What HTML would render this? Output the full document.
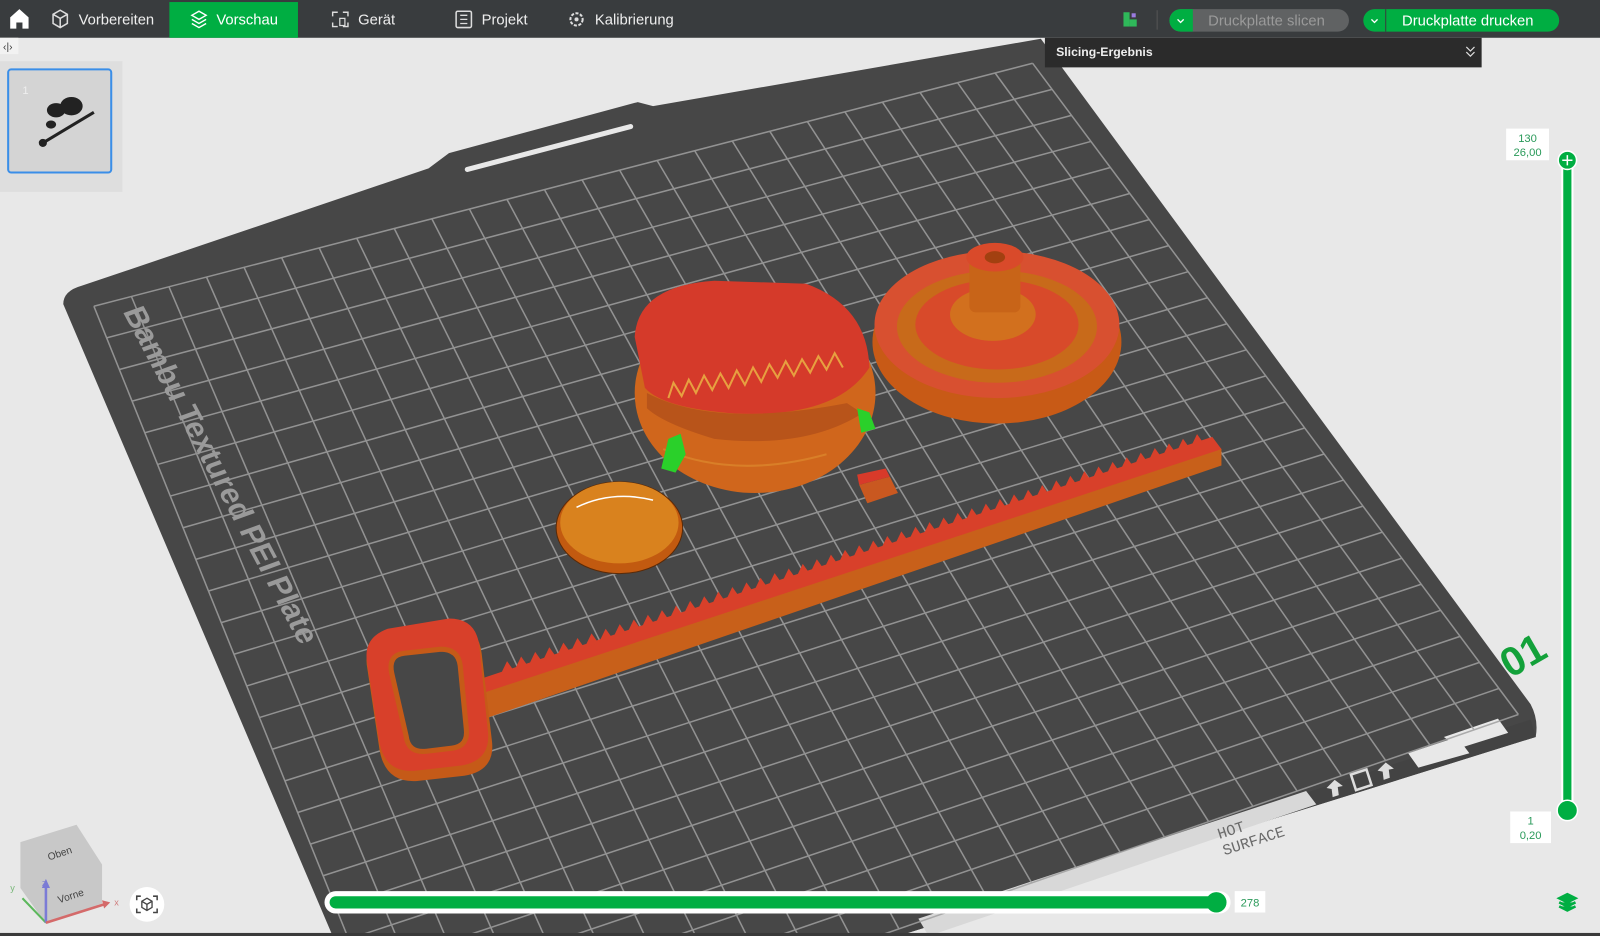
<!DOCTYPE html>
<html><head><meta charset="utf-8">
<style>
html,body{margin:0;padding:0;width:1600px;height:936px;overflow:hidden;background:#e8e8e8;font-family:"Liberation Sans",sans-serif}
svg{display:block}
</style></head>
<body>
<svg id="s" width="1600" height="936" viewBox="0 0 1568 917" preserveAspectRatio="none" xmlns="http://www.w3.org/2000/svg" font-family="Liberation Sans, sans-serif">
<rect width="1568" height="917" fill="#e8e8e8"/>
<path d="M62,298 Q62,285 80,280 L420,165 L440,150 L625,100 L640,104 L1020,38 L1500,690 Q1508,705 1505,722 L880,917 L326,917 Z" fill="#474747"/>
<path d="M1300,770 L1500,705 L1505,722 L880,917 L860,917 Z" fill="#434343"/>
<path d="M900,900 L1280,775 L1290,788 L910,917 Z" fill="#d8d8d8"/>
<text x="1195" y="822" font-size="15" fill="#6a6a6a" transform="rotate(-18 1195 822)" font-family="Liberation Mono, monospace">HOT</text>
<text x="1200" y="838" font-size="15" fill="#6a6a6a" transform="rotate(-18 1200 838)" font-family="Liberation Mono, monospace">SURFACE</text>
<path d="M1380,738 L1428,722 L1440,738 L1390,752 Z M1415,722 L1468,704 L1478,718 L1430,733 Z" fill="#e8e8e8"/>
<rect x="1326" y="756" width="16" height="16" fill="none" stroke="#ddd" stroke-width="2.5" transform="rotate(-18 1334 764)"/>
<path d="M1300,772 l8,-8 l8,6 l-5,1 l1,8 l-6,2 l-1,-8z M1350,755 l8,-8 l8,6 l-5,1 l1,8 l-6,2 l-1,-8z" fill="#ddd"/>
<path d="M458,166 L618,124" stroke="#e8e8e8" stroke-width="5" stroke-linecap="round"/>
<g id="grid" stroke="#a0a0a0" stroke-width="1.5" opacity="0.85"></g>
<text x="0" y="0" font-size="30" font-weight="bold" fill="#9a9a9a" transform="translate(120,305) rotate(62) skewX(-8)">Bambu Textured PEI Plate</text>
<text x="1480" y="665" font-size="40" font-weight="bold" fill="#13a13a" transform="rotate(-30 1480 665)">01</text>

<ellipse cx="607" cy="517" rx="62" ry="45" fill="#c25a10" stroke="#5a2a08"/>
<ellipse cx="607" cy="512" rx="58" ry="40" fill="#d9821e"/>
<path d="M565,497 Q600,480 640,490" stroke="#fff" stroke-width="1.5" fill="none"/>

<ellipse cx="740" cy="385" rx="118" ry="98" fill="#d0661c"/>
<path d="M622,330 Q625,280 700,275 L790,278 Q850,300 852,360 Q820,410 720,405 Q650,400 632,380 Z" fill="#d53a2a"/>
<path d="M634,385 Q700,420 830,395 L845,405 Q790,440 700,430 Q650,415 634,400 Z" fill="#b8541a"/>
<path d="M655,390 L660,375 L668,388 L675,372 L682,385 L690,368 L698,382 L706,366 L714,380 L722,363 L730,377 L738,360 L746,374 L754,357 L762,370 L770,354 L778,368 L786,352 L794,365 L802,349 L810,362 L818,346 L826,360" stroke="#e7a040" stroke-width="2" fill="none"/>
<path d="M650,440 Q720,470 810,445" stroke="#e09030" stroke-width="2" fill="none" opacity=".6"/>
<path d="M655,430 l12,-5 l5,20 l-10,18 l-14,-4 z M840,400 l12,4 l6,16 l-14,4z" fill="#2ad02a"/>

<ellipse cx="977" cy="335" rx="122" ry="80" fill="#c85a16"/>
<ellipse cx="977" cy="318" rx="120" ry="72" fill="#d85030"/>
<ellipse cx="977" cy="320" rx="98" ry="55" fill="#c86a1a"/>
<ellipse cx="977" cy="318" rx="80" ry="44" fill="#d84a2a"/>
<ellipse cx="973" cy="308" rx="42" ry="26" fill="#d2701e"/>
<rect x="950" y="250" width="50" height="56" rx="6" fill="#c86418"/>
<ellipse cx="975" cy="252" rx="28" ry="14" fill="#d94a2a"/>
<ellipse cx="975" cy="252" rx="10" ry="6" fill="#a24010"/>

<path d="M842,475 l30,-8 l8,16 l-30,10z" fill="#c95820"/><path d="M842,475 l30,-8 l-4,-8 l-28,6z" fill="#d83a2a"/>

<path d="M470,678 L1190,432 L1197,440 L1197,456 L478,703 Z" fill="#c8601a"/>
<path d="M462,668 L1188,428 L1197,440 L470,680 Z" fill="#d8402a"/>
<g id="teeth" fill="#d8402a"></g>
<path d="M360,655 Q355,630 380,620 L440,610 Q468,610 472,640 L482,725 Q486,755 455,760 L410,765 Q378,768 372,735 Z" fill="#c55a18"/>
<path d="M360,650 Q355,625 380,616 L440,606 Q468,606 470,636 L478,715 Q482,745 452,750 L408,755 Q378,758 372,728 Z" fill="#d8402a"/>
<path d="M384,660 Q380,642 396,640 L432,636 Q449,636 451,652 L457,714 Q459,731 443,733 L418,736 Q400,738 398,721 Z" fill="#474747" stroke="#c55a18" stroke-width="5"/>

<rect x="0" y="0" width="1568" height="37" fill="#393c3e"/>
<rect x="166" y="2" width="126" height="35" fill="#00ae42"/>
<path d="M10,28 L10,17 L19,9 L28,17 L28,28 L22,28 L22,22 L16,22 L16,28Z" fill="#fff"/>
<path d="M52,14 l7,-4 l7,4 v9 l-7,4 l-7,-4z M52,14 l7,4 l7,-4 M59,18 v9" stroke="#ddd" stroke-width="1.5" fill="none"/>
<text x="77" y="24" font-size="14.5" fill="#eee">Vorbereiten</text>
<path d="M188,15 l7,-4 l7,4 l-7,4z M188,19 l7,4 l7,-4 M188,23 l7,4 l7,-4" stroke="#fff" stroke-width="1.4" fill="none"/>
<text x="212" y="24" font-size="14.5" fill="#fff">Vorschau</text>
<path d="M326,16 v-4 h5 M336,12 h5 v4 M326,22 v4 h5 M341,22 v4 h-5" stroke="#ddd" stroke-width="1.4" fill="none"/><rect x="333" y="18" width="5" height="7" fill="none" stroke="#ddd" stroke-width="1.2"/>
<text x="351" y="24" font-size="14.5" fill="#eee">Gerät</text>
<rect x="447" y="11" width="15" height="16" rx="1.5" fill="none" stroke="#ddd" stroke-width="1.5"/><path d="M451,15 h7 M451,19 h7 M451,23 h7" stroke="#ddd" stroke-width="1.3"/>
<text x="472" y="24" font-size="14.5" fill="#eee">Projekt</text>
<circle cx="565" cy="19" r="6" fill="none" stroke="#ddd" stroke-width="2" stroke-dasharray="3 1.5"/><circle cx="565" cy="19" r="2" fill="#ddd"/>
<text x="583" y="24" font-size="14.5" fill="#eee">Kalibrierung</text>
<rect x="1101" y="12" width="6" height="14" fill="#2fb85a"/><rect x="1107" y="19" width="7" height="7" fill="#2fb85a"/><rect x="1109" y="13" width="4" height="4" fill="#9b7be0"/>
<line x1="1134" y1="10" x2="1134" y2="29" stroke="#555"/>
<rect x="1146" y="9" width="176" height="22" rx="11" fill="#606263"/>
<path d="M1146,20 a11,11 0 0 1 11,-11 h12 v22 h-12 a11,11 0 0 1 -11,-11z" fill="#00ae42"/>
<path d="M1154,19 l3,3 l3,-3" stroke="#fff" stroke-width="1.3" fill="none"/>
<text x="1184" y="25" font-size="14.5" fill="#9a9a9a">Druckplatte slicen</text>
<rect x="1336" y="9" width="192" height="22" rx="11" fill="#00ae42"/>
<line x1="1358" y1="9" x2="1358" y2="31" stroke="#393c3e" stroke-width="1"/>
<path d="M1344,19 l3,3 l3,-3" stroke="#fff" stroke-width="1.3" fill="none"/>
<text x="1374" y="25" font-size="14.5" fill="#fff">Druckplatte drucken</text>

<rect x="1024" y="37" width="428" height="29" fill="#2b2b2b"/>
<text x="1035" y="55" font-size="12" font-weight="bold" fill="#eee">Slicing-Ergebnis</text>
<path d="M1437,46 l4,4 l4,-4 M1437,51 l4,4 l4,-4" stroke="#ddd" stroke-width="1.2" fill="none"/>

<rect x="0" y="37" width="18" height="16" fill="#f2f2f2"/><text x="3" y="49" font-size="10" fill="#333">‹|›</text>
<rect x="0" y="60" width="120" height="128" fill="#dedede"/>
<rect x="8" y="68" width="101" height="101" rx="3" fill="#d4d4d4" stroke="#3a8ee8" stroke-width="2"/>
<text x="22" y="92" font-size="11" fill="#eee">1</text>
<ellipse cx="70" cy="104" rx="11" ry="9" fill="#222"/><ellipse cx="55" cy="108" rx="9" ry="7" fill="#222"/><ellipse cx="50" cy="122" rx="5" ry="4" fill="#222"/>
<path d="M42,140 L92,110" stroke="#222" stroke-width="3"/><circle cx="42" cy="140" r="4" fill="#222"/>

<rect x="1530" y="157" width="12" height="638" fill="#fff" rx="6"/>
<rect x="1532" y="158" width="8" height="636" fill="#00ae42"/>
<circle cx="1536" cy="157" r="9" fill="#00ae42" stroke="#fff" stroke-width="1.5"/>
<path d="M1536,152 v10 M1531,157 h10" stroke="#fff" stroke-width="1.5"/>
<circle cx="1536" cy="794" r="10" fill="#00ae42" stroke="#fff" stroke-width="1.5"/>
<rect x="1476" y="126" width="42" height="31" fill="#fff"/>
<text x="1497" y="139" font-size="11" fill="#2a9a5a" text-anchor="middle">130</text>
<text x="1497" y="153" font-size="11" fill="#2a9a5a" text-anchor="middle">26,00</text>
<rect x="1480" y="795" width="40" height="31" fill="#fff"/>
<text x="1500" y="808" font-size="11" fill="#2a9a5a" text-anchor="middle">1</text>
<text x="1500" y="822" font-size="11" fill="#2a9a5a" text-anchor="middle">0,20</text>
<path d="M1528,880 l8,-4 l8,4 l-8,4z M1528,884 l8,4 l8,-4 M1528,888 l8,4 l8,-4" stroke="#00ae42" stroke-width="2.5" fill="#00ae42"/>

<rect x="318" y="873" width="888" height="22" rx="11" fill="#fff"/>
<rect x="323" y="878" width="870" height="12" rx="6" fill="#00ae42"/>
<circle cx="1192" cy="884" r="10" fill="#00ae42"/>
<rect x="1210" y="873" width="30" height="21" fill="#fff"/>
<text x="1225" y="888" font-size="11" fill="#2a9a5a" text-anchor="middle">278</text>

<path d="M20,825 L75,808 L100,847 L100,885 L45,905 L20,870 Z" fill="#c8c8c8"/>
<text x="48" y="843" font-size="10" fill="#444" transform="rotate(-18 48 843)">Oben</text>
<text x="58" y="885" font-size="10" fill="#444" transform="rotate(-18 58 885)">Vorne</text>
<path d="M45,904 L22,880" stroke="#5cb85c" stroke-width="2"/>
<path d="M45,904 V868" stroke="#7b7bd6" stroke-width="2.5"/><path d="M41,870 l4,-9 l4,9z" fill="#7b7bd6"/>
<path d="M45,904 L102,886" stroke="#d46a6a" stroke-width="2.5"/><path d="M100,882 l8,2 l-6,6z" fill="#d46a6a"/>
<text x="10" y="873" font-size="9" fill="#7ab87a">y</text><text x="112" y="887" font-size="9" fill="#d08080">x</text><text x="41" y="868" font-size="9" fill="#8080d0">z</text>
<circle cx="144" cy="886" r="17" fill="#fff"/>
<path d="M138,878 h-4 v4 M150,878 h4 v4 M138,894 h-4 v-4 M150,894 h4 v-4" stroke="#444" stroke-width="1.5" fill="none"/>
<path d="M144,880 l5,3 v6 l-5,3 l-5,-3 v-6z M139,883 l5,3 l5,-3 M144,886 v6" stroke="#444" stroke-width="1.3" fill="none"/>
<rect x="0" y="914" width="1568" height="3" fill="#3a3a3a"/>
</svg>
<script>
(function(){
var ns="http://www.w3.org/2000/svg",g=document.getElementById('grid');
var TL=[92,300],TR=[1012,62],BR=[1488,700],BL=[404,1075];
function L(a,b,t){return [a[0]+(b[0]-a[0])*t,a[1]+(b[1]-a[1])*t];}
var N=25;
for(var i=0;i<=N;i++){var t=i/N;
 var a=L(TL,TR,t),b=L(BL,BR,t);add(a,b);
 var c=L(TL,BL,t),d=L(TR,BR,t);add(c,d);}
function add(a,b){var l=document.createElementNS(ns,'line');l.setAttribute('x1',a[0]);l.setAttribute('y1',a[1]);l.setAttribute('x2',b[0]);l.setAttribute('y2',b[1]);g.appendChild(l);}
var th=document.getElementById('teeth'),s='';
var A=[490,660],B=[1180,433];
for(var k=0;k<50;k++){var t=k/50,p=L(A,B,t),q=L(A,B,t+0.01),r=L(A,B,t+0.02);
 s+='M'+p[0]+','+(p[1]+2)+' L'+q[0]+','+(q[1]-10)+' L'+r[0]+','+(r[1]+2)+'Z ';}
var pa=document.createElementNS(ns,'path');pa.setAttribute('d',s);th.appendChild(pa);
})();
</script>
</body></html>
